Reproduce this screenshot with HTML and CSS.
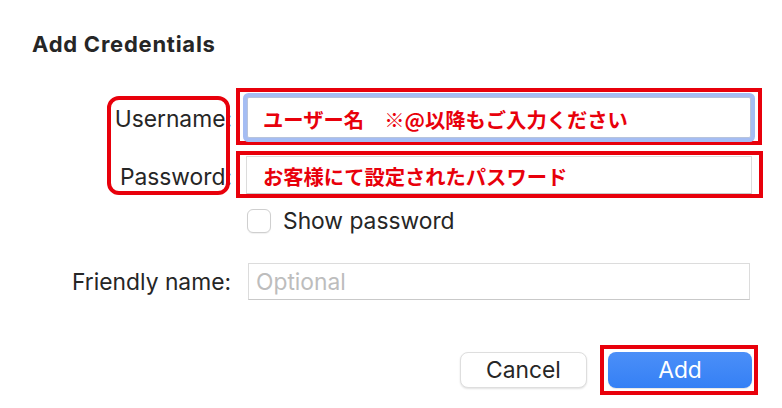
FILE: index.html
```html
<!DOCTYPE html>
<html lang="ja">
<head>
<meta charset="utf-8">
<title>Add Credentials</title>
<link rel="stylesheet" href="styles.css">
</head>
<body>
<main class="dialog">
  <h1 class="title">Add Credentials</h1>

  <div class="cred-group">
    <div class="label-mark">
      <label class="label">Username:</label>
      <label class="label">Password:</label>
    </div>
    <div class="fields">
      <div class="field-mark field-mark-user">
        <div class="input input-focus"><span class="note">ユーザー名　※@以降もご入力ください</span></div>
      </div>
      <div class="field-mark field-mark-pass">
        <div class="input input-pass"><span class="note">お客様にて設定されたパスワード</span></div>
      </div>
    </div>
  </div>

  <div class="check-row">
    <span class="checkbox"></span>
    <span class="check-label">Show password</span>
  </div>

  <div class="friendly-row">
    <label class="friendly-label">Friendly name:</label>
    <div class="input input-friendly"><span class="placeholder">Optional</span></div>
  </div>

  <div class="actions">
    <button class="btn btn-cancel" type="button">Cancel</button>
    <div class="btn-mark">
      <button class="btn btn-add" type="button">Add</button>
    </div>
  </div>
</main>
</body>
</html>
```

FILE: styles.css
```css
* { box-sizing: border-box; }

html, body {
  margin: 0;
  padding: 0;
  background: #ffffff;
}

body {
  width: 782px;
  height: 408px;
  overflow: hidden;
  font-family: Inter, "Liberation Sans", sans-serif;
  color: #262626;
}

.dialog {
  padding: 32px 0 0 0;
}

.title {
  margin: 0 0 0 32px;
  font-size: 22px;
  line-height: 24px;
  font-weight: 700;
  letter-spacing: 0.75px;
  color: #262626;
}

.cred-group {
  display: flex;
  align-items: flex-start;
  margin-top: 32px;
  padding-left: 107px;
  gap: 6px;
}

.label-mark {
  position: relative;
  width: 123px;
  height: 99px;
  margin-top: 8px;
  display: flex;
  flex-direction: column;
  align-items: flex-end;
  padding-top: 11px;
  gap: 34px;
}

.label-mark::after {
  content: "";
  position: absolute;
  inset: 0;
  border: 4px solid #e8000b;
  border-radius: 12px;
  pointer-events: none;
}

.label {
  font-size: 22.8px;
  line-height: 24px;
  margin-right: -2px;
  color: #262626;
  white-space: nowrap;
}

.fields {
  display: flex;
  flex-direction: column;
  gap: 6px;
}

.field-mark {
  border: 4px solid #e8000b;
}

.field-mark-user {
  width: 526px;
  height: 57px;
  padding: 5px 7px 3px 7px;
}

.field-mark-pass {
  width: 527px;
  height: 47px;
  padding: 1px 7px 0 6px;
}

.input {
  display: flex;
  align-items: center;
  background: #ffffff;
  border: 1px solid #dcdcdc;
  border-bottom-color: #c9c9c9;
}

.input-focus {
  height: 41px;
  border-radius: 2px;
  border-color: #b8c4dc;
  box-shadow: 0 0 0 4px #a5bdf3;
  padding-left: 15px;
}

.input-pass {
  height: 38px;
  padding-left: 16px;
}

.note {
  font-family: "Noto Sans CJK JP", sans-serif;
  font-weight: 700;
  font-size: 20.3px;
  line-height: 24px;
  color: #e8000b;
  white-space: nowrap;
  padding-top: 2px;
}

.note-at {
  letter-spacing: 0;
}

.check-row {
  display: flex;
  align-items: center;
  gap: 12px;
  margin-top: 11px;
  padding-left: 247px;
  height: 24px;
}

.checkbox {
  width: 24px;
  height: 24px;
  border: 1px solid #cfcfcf;
  border-radius: 6px;
  background: #ffffff;
  box-shadow: 0 1px 1px rgba(0, 0, 0, 0.06);
}

.check-label {
  font-size: 22.8px;
  line-height: 24px;
}

.friendly-row {
  display: flex;
  align-items: center;
  gap: 17px;
  margin-top: 30px;
  padding-left: 32px;
}

.friendly-label {
  width: 199px;
  text-align: right;
  font-size: 22.8px;
  line-height: 24px;
  white-space: nowrap;
}

.input-friendly {
  width: 502px;
  height: 37px;
  padding-left: 7px;
}

.placeholder {
  font-size: 22.8px;
  line-height: 24px;
  color: #bdbdbd;
}

.actions {
  display: flex;
  justify-content: flex-end;
  align-items: center;
  gap: 13px;
  margin-top: 45px;
  padding-right: 24px;
}

.btn {
  font-family: Inter, "Liberation Sans", sans-serif;
  font-size: 22.8px;
  line-height: 24px;
  height: 36px;
  border-radius: 8px;
  padding: 0;
  cursor: default;
}

.btn-cancel {
  width: 127px;
  background: #ffffff;
  color: #262626;
  border: 1px solid #dedede;
  box-shadow: 0 1px 2px rgba(0, 0, 0, 0.12);
}

.btn-mark {
  width: 158px;
  height: 50px;
  border: 4px solid #e8000b;
  padding: 3px 2px 3px 4px;
}

.btn-add {
  width: 144px;
  border: none;
  color: #ffffff;
  background: linear-gradient(#4b8ff8, #3580f5);
  box-shadow: 0 1px 1px rgba(0, 0, 0, 0.1);
}
```
